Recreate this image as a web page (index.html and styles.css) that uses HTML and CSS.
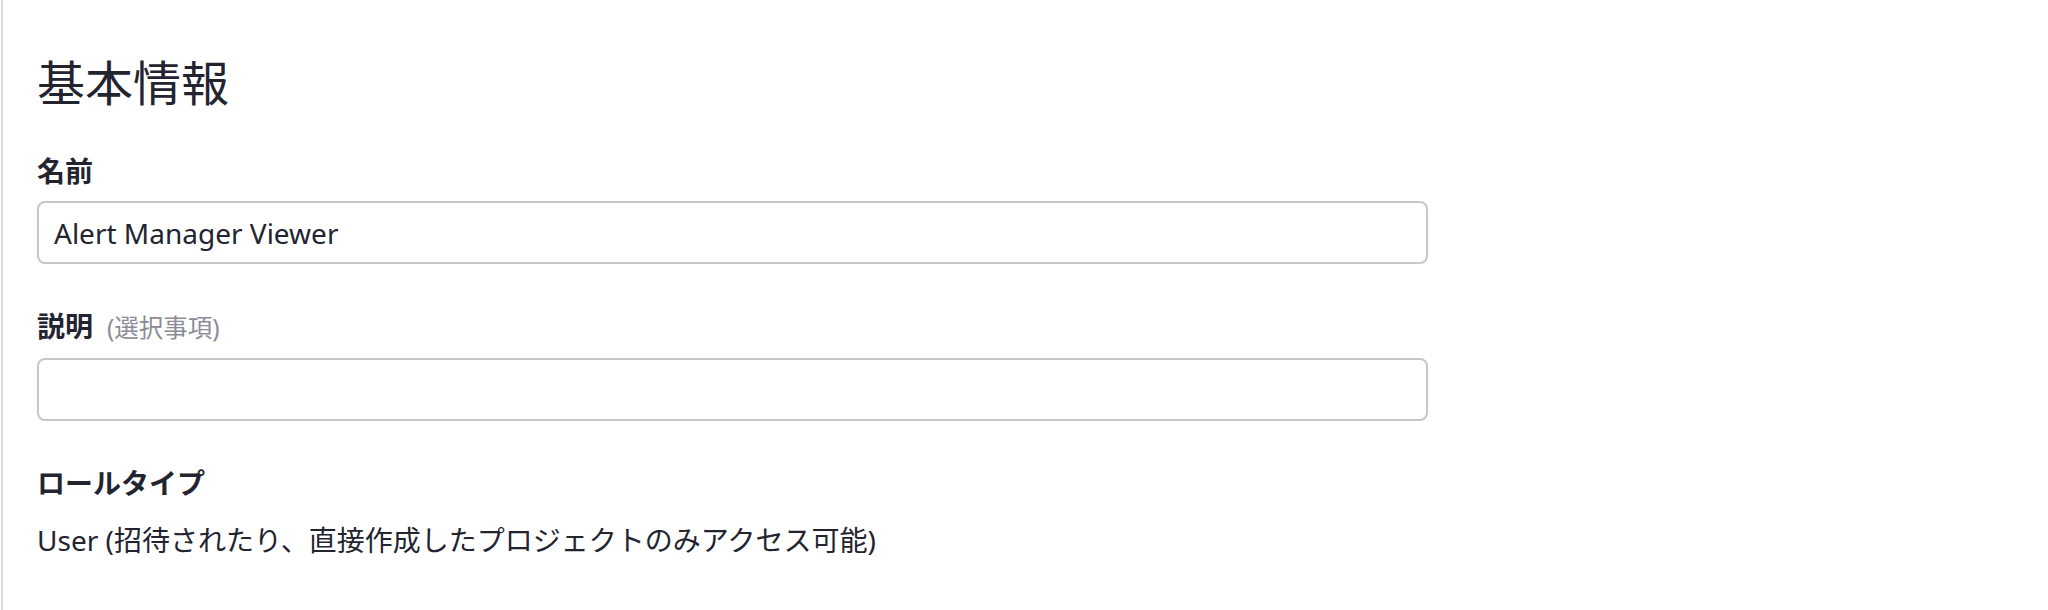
FILE: index.html
```html
<!DOCTYPE html>
<html lang="ja">
<head>
<meta charset="utf-8">
<link rel="stylesheet" href="styles.css">
</head>
<body>
<div class="panel">
  <h1 class="title">基本情報</h1>
  <div class="field">
    <label class="label">名前</label>
    <input class="input" type="text" value="Alert Manager Viewer">
  </div>
  <div class="field">
    <label class="label">説明<span class="optional">(選択事項)</span></label>
    <input class="input" type="text" value="">
  </div>
  <div class="field">
    <div class="label">ロールタイプ</div>
    <div class="value">User (招待されたり、直接作成したプロジェクトのみアクセス可能)</div>
  </div>
</div>
</body>
</html>
```

FILE: styles.css
```css
html, body {
  margin: 0;
  padding: 0;
  background: #ffffff;
}
body {
  font-family: "Noto Sans", "Noto Sans CJK JP", sans-serif;
  color: #23242f;
}
.panel {
  margin-left: 1px;
  border-left: 2px solid #dcdcdf;
  padding: 55px 0 0 34px;
  min-height: 610px;
  box-sizing: border-box;
}
.title {
  margin: 0;
  font-size: 48px;
  font-weight: 400;
  line-height: 56px;
}
.field {
  display: flex;
  flex-direction: column;
  margin-top: 40px;
}
.field + .field {
  margin-top: 42px;
}
.label {
  display: block;
  font-size: 28px;
  font-weight: 700;
  line-height: 40px;
  margin-bottom: 10px;
}
.optional {
  font-weight: 400;
  color: #8b8c97;
  font-size: 24.5px;
  margin-left: 14px;
}
.input {
  box-sizing: border-box;
  width: 1391px;
  height: 63px;
  border: 2px solid #c6c6cb;
  border-radius: 8px;
  padding: 0 15px;
  font-family: "Noto Sans", "Noto Sans CJK JP", sans-serif;
  font-size: 28px;
  color: #23242f;
  background: #fff;
  outline: none;
}
.value {
  font-size: 28px;
  line-height: 40px;
  margin-top: 7px;
}
```
